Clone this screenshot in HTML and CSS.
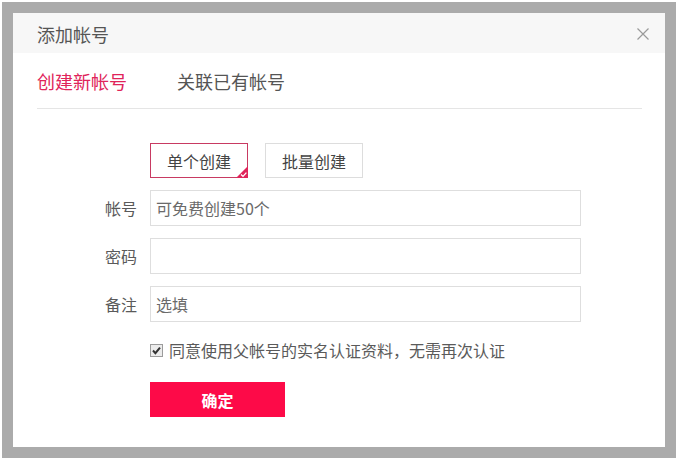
FILE: index.html
```html
<!DOCTYPE html>
<html lang="zh-CN">
<head>
<meta charset="utf-8">
<title>添加帐号</title>
<link rel="stylesheet" href="styles.css">
</head>
<body>
<div class="frame">
  <div class="dialog">
    <div class="dialog-header">
      <span class="dialog-title">添加帐号</span>
      <span class="close">
        <svg width="12" height="12" viewBox="0 0 12 12"><path d="M0.5 0.5 L11.5 11.5 M11.5 0.5 L0.5 11.5" stroke="#9a9a9a" stroke-width="1.2" fill="none"/></svg>
      </span>
    </div>
    <div class="dialog-body">
      <div class="tabs">
        <span class="tab active">创建新帐号</span>
        <span class="tab">关联已有帐号</span>
      </div>
      <div class="form">
        <div class="row seg-row">
          <span class="label"></span>
          <div class="segs">
            <span class="seg selected">单个创建
              <svg class="corner" width="12" height="12" viewBox="0 0 12 12"><path d="M12 0 L12 12 L0 12 Z" fill="#e0245a"/><path d="M5 8.6 L7 10.4 L10.4 6.6" stroke="#fff" stroke-width="1.3" fill="none"/></svg>
            </span>
            <span class="seg">批量创建</span>
          </div>
        </div>
        <div class="row">
          <span class="label">帐号</span>
          <input class="field" type="text" placeholder="可免费创建50个">
        </div>
        <div class="row">
          <span class="label">密码</span>
          <input class="field" type="text">
        </div>
        <div class="row">
          <span class="label">备注</span>
          <input class="field" type="text" placeholder="选填">
        </div>
        <div class="row check-row">
          <span class="label"></span>
          <span class="checkbox">
            <svg width="13" height="13" viewBox="0 0 13 13"><rect x="0.5" y="0.5" width="12" height="12" fill="#ececec" stroke="#9c9c9c"/><path d="M3 6.5 L5.4 9.2 L10 3.6" stroke="#333" stroke-width="2" fill="none"/></svg>
          </span>
          <span class="check-text">同意使用父帐号的实名认证资料，无需再次认证</span>
        </div>
        <div class="row submit-row">
          <span class="label"></span>
          <button class="submit" type="button">确定</button>
        </div>
      </div>
    </div>
  </div>
</div>
</body>
</html>
```
FILE: styles.css
```css
* { box-sizing: border-box; }
body {
  margin: 0;
  background: #fff;
  font-family: "Noto Sans CJK SC", "Noto Sans", "Liberation Sans", sans-serif;
  color: #555;
}
.frame {
  margin: 2px 0 0 2px;
  width: 674px;
  height: 456px;
  border: 11px solid #ababab;
}
.dialog {
  width: 652px;
  height: 434px;
  background: #fff;
}
.dialog-header {
  height: 40px;
  background: #f7f7f7;
  display: flex;
  align-items: center;
  justify-content: space-between;
  padding: 0 16px 0 24px;
}
.dialog-title {
  font-size: 18px;
  color: #555;
  line-height: 1;
  padding-top: 2px;
}
.close { display: flex; padding-top: 2px; }
.dialog-body {
  padding: 0 23px 0 24px;
}
.tabs {
  height: 56px;
  border-bottom: 1px solid #e5e5e5;
  display: flex;
  align-items: center;
  gap: 50px;
  font-size: 18px;
}
.tab { color: #555; line-height: 1; }
.tab.active { color: #e0245a; }
.form {
  padding-top: 34px;
}
.row {
  display: flex;
  align-items: center;
  height: 36px;
  margin-bottom: 12px;
}
.label {
  width: 113px;
  padding-right: 13px;
  text-align: right;
  font-size: 16px;
  color: #5a5a5a;
  flex: none;
}
.seg-row { height: 35px; }
.segs { display: flex; gap: 17px; }
.seg {
  position: relative;
  width: 98px;
  height: 35px;
  border: 1px solid #ddd;
  display: flex;
  align-items: center;
  justify-content: center;
  font-size: 16px;
  color: #444;
}
.seg.selected { border-color: #c83a62; }
.corner {
  position: absolute;
  right: -1px;
  bottom: -1px;
}
.field {
  width: 431px;
  height: 36px;
  border: 1px solid #dedede;
  padding: 0 5px;
  font-family: inherit;
  font-size: 16px;
  color: #555;
  outline: none;
}
.field::placeholder { color: #6a6a6a; }
.check-row {
  height: 32px;
  margin-bottom: 16px;
}
.checkbox { display: flex; width: 19px; flex: none; }
.check-text { font-size: 16px; color: #5a5a5a; }
.submit-row { height: 35px; }
.submit {
  width: 135px;
  height: 35px;
  border: none;
  background: #fd0a48;
  color: #fff;
  font-family: inherit;
  font-size: 16px;
  font-weight: bold;
  padding: 0;
}
```
